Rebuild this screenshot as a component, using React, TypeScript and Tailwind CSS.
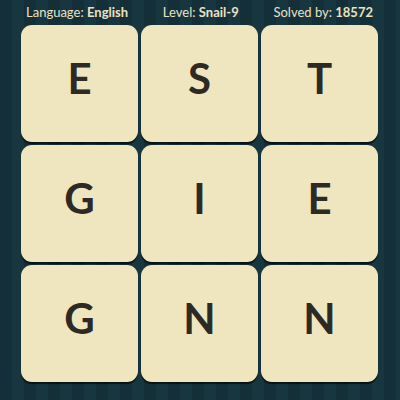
import React from 'react';

const letters = ['E', 'S', 'T', 'G', 'I', 'E', 'G', 'N', 'N'];

const Tile: React.FC<{ letter: string }> = ({ letter }) => (
  <div className="h-[117px] w-[117px] rounded-[11px] bg-[#efe6bf] shadow-[0_2px_1px_rgba(0,0,0,0.6)] flex items-center justify-center pb-[11px]">
    <span className="text-[42px] font-bold leading-none text-[#2d2a25]">{letter}</span>
  </div>
);

export default function App() {
  return (
    <div
      className="w-[400px] h-[400px] overflow-hidden bg-[repeating-linear-gradient(90deg,#142f37_0px,#142f37_12px,#18363f_12px,#18363f_24px)] font-['Lato','Open_Sans',sans-serif]"
    >
      <div className="flex justify-between pl-[26px] pr-[27px] pt-[4px] h-[25px] text-[13px] leading-[16px] text-[#e9e2c4]">
        <span>
          Language: <b className="font-bold">English</b>
        </span>
        <span>
          Level: <b className="font-bold">Snail-9</b>
        </span>
        <span>
          Solved by: <b className="font-bold">18572</b>
        </span>
      </div>
      <div className="ml-[21px] grid grid-cols-[117px_117px_117px] gap-[3px]">
        {letters.map((l, i) => (
          <Tile key={i} letter={l} />
        ))}
      </div>
    </div>
  );
}
